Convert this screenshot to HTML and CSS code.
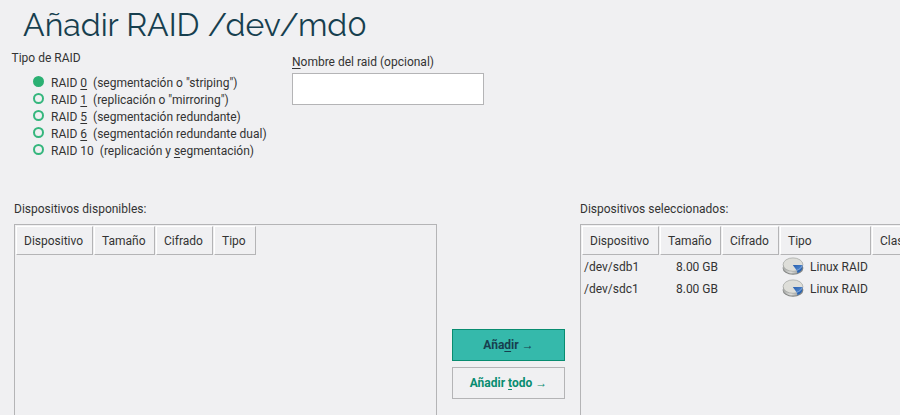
FILE: index.html
```html
<!DOCTYPE html>
<html lang="es">
<head>
<meta charset="utf-8">
<title>Añadir RAID /dev/md0</title>
<link rel="stylesheet" href="styles.css">
</head>
<body>
<svg class="defs" width="0" height="0" aria-hidden="true">
  <defs>
    <linearGradient id="rim" x1="0" x2="1"><stop offset="0" stop-color="#a5a7a5"/><stop offset=".4" stop-color="#dcdddb"/><stop offset="1" stop-color="#7b7e7c"/></linearGradient>
    <linearGradient id="slice" x1="0" x2="1" y2="1"><stop offset="0" stop-color="#285fae"/><stop offset="1" stop-color="#5b91d5"/></linearGradient>
    <symbol id="disk" viewBox="0 0 22 18">
      <ellipse cx="11" cy="10.9" rx="10.4" ry="6.9" fill="#666967" opacity=".8"/>
      <path d="M1 7.6v2.3c0 3.8 4.5 6.7 10 6.7s10-2.9 10-6.7V7.6z" fill="url(#rim)"/>
      <ellipse cx="11" cy="7.6" rx="9.9" ry="6.7" fill="#deded9" stroke="#a0a3a0" stroke-width=".7"/>
      <path d="M10.8 7.9h9.6c0 2.4-2.2 4.7-5.5 5.8z" fill="url(#slice)"/>
      <path d="M14.9 13.7c3.3-1.1 5.5-3.4 5.5-5.8v2.7c0 2.2-2 4.5-4.8 5.6z" fill="#2b65b4"/>
      <path d="M14.7 13.3c3-1 4.8-2.8 5.3-4.8" fill="none" stroke="#8db5e8" stroke-width=".6"/>
    </symbol>
  </defs>
</svg>
<main class="dialog">
  <h1 class="title">Añadir RAID /dev/md0</h1>
  <section class="options">
    <fieldset class="levels">
      <legend>Tipo de RAID</legend>
      <label class="level"><i class="dot on"></i><span>RAID <u>0</u>&nbsp; (segmentación o "striping")</span></label>
      <label class="level"><i class="dot"></i><span>RAID <u>1</u>&nbsp; (replicación o "mirroring")</span></label>
      <label class="level"><i class="dot"></i><span>RAID <u>5</u>&nbsp; (segmentación redundante)</span></label>
      <label class="level"><i class="dot"></i><span>RAID <u>6</u>&nbsp; (segmentación redundante dual)</span></label>
      <label class="level"><i class="dot"></i><span>RAID 10&nbsp; (replicación y <u>s</u>egmentación)</span></label>
    </fieldset>
    <div class="name">
      <label for="raid-name"><u>N</u>ombre del raid (opcional)</label>
      <input id="raid-name" type="text">
    </div>
  </section>
  <section class="devices">
    <div class="group">
      <div class="caption">Dispositivos disponibles:</div>
      <div class="list">
        <div class="row head"><span>Dispositivo</span><span>Tamaño</span><span>Cifrado</span><span>Tipo</span></div>
      </div>
    </div>
    <div class="actions">
      <button class="btn primary">Aña<u>d</u>ir <span class="arrow">→</span></button>
      <button class="btn">Añadir <u>t</u>odo <span class="arrow">→</span></button>
    </div>
    <div class="group">
      <div class="caption">Dispositivos seleccionados:</div>
      <div class="list selected">
        <div class="row head"><span>Dispositivo</span><span>Tamaño</span><span>Cifrado</span><span>Tipo</span><span>Clase</span></div>
        <div class="row item"><span>/dev/sdb1</span><span class="size">8.00 GB</span><span></span><span class="kind"><svg class="disk"><use href="#disk"/></svg>Linux RAID</span></div>
        <div class="row item"><span>/dev/sdc1</span><span class="size">8.00 GB</span><span></span><span class="kind"><svg class="disk"><use href="#disk"/></svg>Linux RAID</span></div>
      </div>
    </div>
  </section>
</main>
</body>
</html>
```
FILE: styles.css
```css
* { box-sizing: border-box; }
body {
  margin: 0;
  background: #f0f0f2;
  color: #333;
  font: 12px/17px Roboto, sans-serif;
  overflow: hidden;
}
.defs { display: block; }
u { text-decoration: underline 1px; text-underline-offset: 2px; text-decoration-skip-ink: none; }
.dialog { display: flex; flex-direction: column; height: 415px; }
.title {
  margin: 0;
  padding: 5px 0 0 23px;
  height: 50px;
  font: 400 32px/40px Raleway, "Open Sans", sans-serif;
  color: #173f4f;
  white-space: nowrap;
}
.options { display: grid; grid-template-columns: 292px 192px; height: 151px; }
.levels { margin: 0; padding: 0 0 0 33px; border: 0; min-width: 0; }
.levels legend { margin: 0 0 8px -21.5px; padding: 0; }
.level { display: flex; align-items: center; gap: 7px; height: 17px; white-space: nowrap; }
.dot {
  width: 11px;
  height: 11px;
  border: 2px solid #35b67d;
  border-radius: 50%;
  margin-bottom: 4px;
}
.dot.on { background: #2bb073; border-color: #2bb073; }
.name { display: flex; flex-direction: column; gap: 2px; padding-top: 4px; }
.name input { width: 192px; height: 32px; border: 1px solid #b4b4b6; background: #fff; }
.devices {
  flex: 1;
  display: grid;
  grid-template-columns: 423px 113px 320px;
  column-gap: 15px;
  padding-left: 14px;
}
.group { display: flex; flex-direction: column; min-width: 0; }
.caption { height: 23px; }
.list { flex: 1; border: 1px solid #b4b4b6; border-bottom: 0; padding: 1px 0 0 1px; }
.list.selected { border-right: 0; overflow: hidden; }
.row { display: grid; grid-template-columns: 77px 61px 57px 42px; column-gap: 1px; }
.selected .row { grid-template-columns: 77px 61px 57px 91px 60px; }
.head span {
  height: 29px;
  padding: 6px 0 0 7px;
  border: 1px solid #b4b4b6;
  border-top-color: #fff;
  border-left-color: #fff;
}
.item { height: 22px; line-height: 22px; white-space: nowrap; padding-top: 1px; }
.item > :first-child { padding-left: 2px; }
.size { padding-right: 3px; text-align: right; }
.kind { display: flex; padding-left: 2px; gap: 6px; }
.disk { width: 22px; height: 18px; margin-top: 1px; }
.actions { display: flex; flex-direction: column; gap: 6px; padding-top: 128px; }
.btn {
  height: 32px;
  padding: 0;
  border: 1px solid #b4b4b6;
  background: #f0f0f2;
  color: #088c70;
  font: bold 12px/17px Roboto, sans-serif;
}
.btn.primary { background: #35b9ab; border-color: #088c70; color: #173f4f; }
.arrow { font-weight: 400; }
```
